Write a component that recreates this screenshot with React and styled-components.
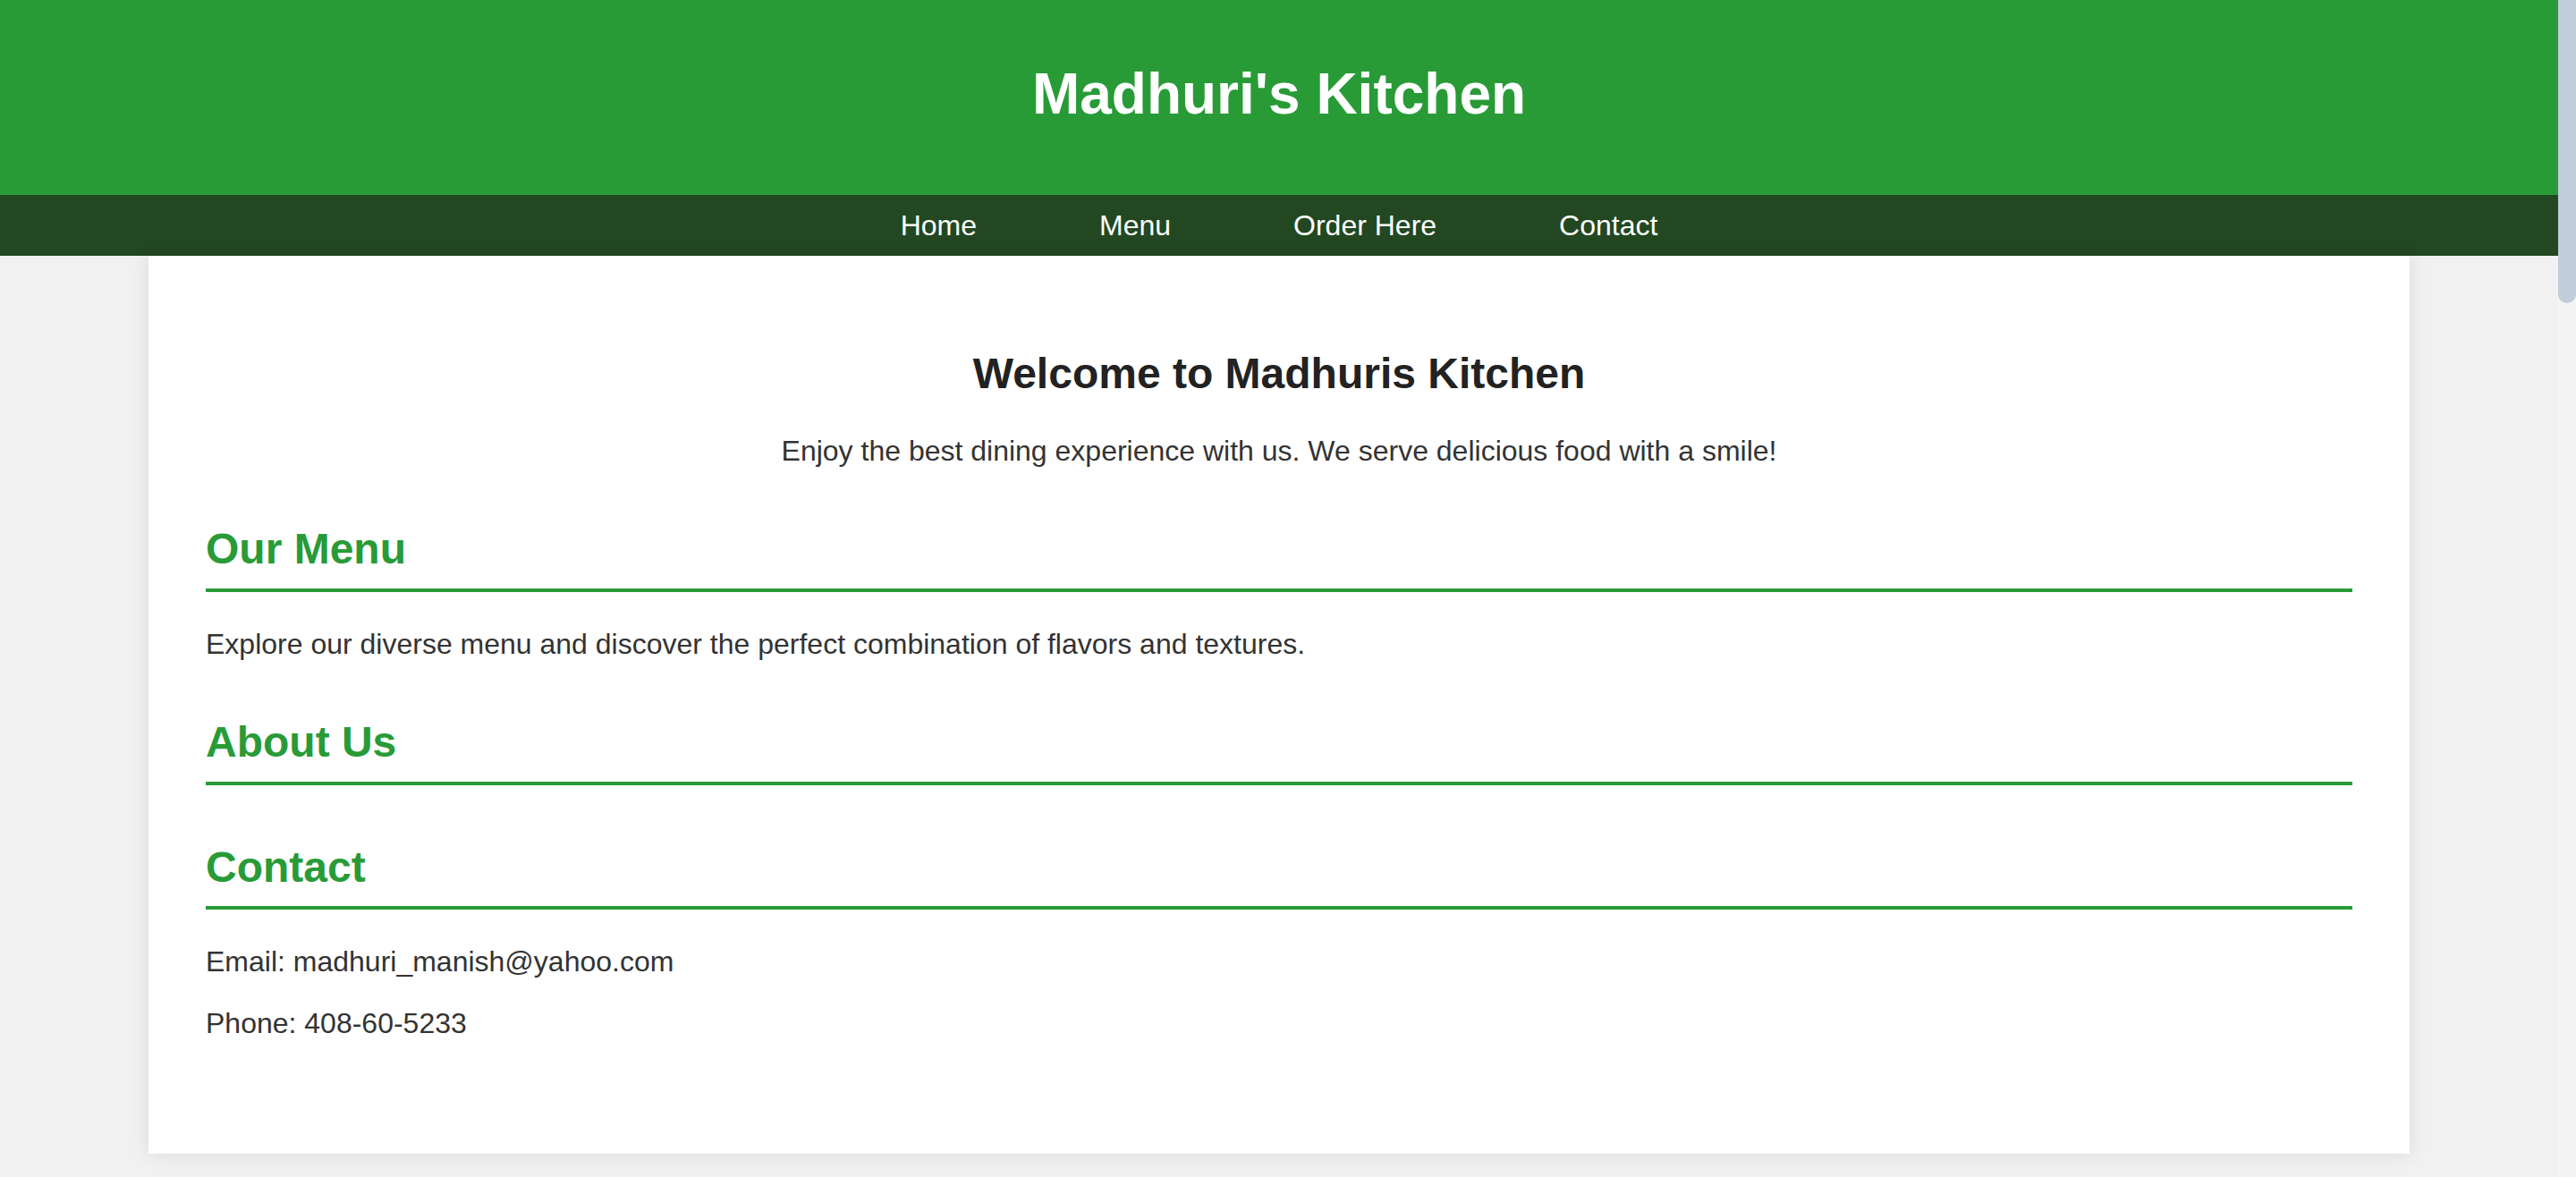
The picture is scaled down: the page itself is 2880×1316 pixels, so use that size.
import styled, { createGlobalStyle } from 'styled-components';

const GlobalStyle = createGlobalStyle`
  html,
  body {
    margin: 0;
    height: 100%;
    overflow: hidden;
  }

  body {
    font-family: 'Liberation Sans', Arial, sans-serif;
    font-size: 32px;
    line-height: 1.15;
    color: #333;
    background: #f1f1f1;
  }
`;

const links = ['Home', 'Menu', 'Order Here', 'Contact'];

const App = () => {
  return (
    <Shell>
      <GlobalStyle />
      <Page>
        <Header>
          <Title>Madhuri's Kitchen</Title>
        </Header>
        <Nav>
          <NavList>
            {links.map((l) => (
              <li key={l}>
                <NavLink href="#">{l}</NavLink>
              </li>
            ))}
          </NavList>
        </Nav>
        <Card>
          <Hero>
            <HeroTitle>Welcome to Madhuris Kitchen</HeroTitle>
            <Text>Enjoy the best dining experience with us. We serve delicious food with a smile!</Text>
          </Hero>
          <Section>
            <SectionTitle>Our Menu</SectionTitle>
            <Text>Explore our diverse menu and discover the perfect combination of flavors and textures.</Text>
          </Section>
          <Section>
            <SectionTitle>About Us</SectionTitle>
          </Section>
          <Section>
            <SectionTitle>Contact</SectionTitle>
            <Text>Email: madhuri_manish@yahoo.com</Text>
            <Text>Phone: 408-60-5233</Text>
          </Section>
        </Card>
      </Page>
      <Rail>
        <Thumb />
      </Rail>
    </Shell>
  );
};

const Shell = styled.div`
  display: flex;
  height: 100vh;
`;

const Page = styled.div`
  flex: 1;
  min-width: 0;
  background: #f1f1f1;
`;

const Header = styled.header`
  background: #289b37;
  color: #fff;
  text-align: center;
  padding: 69px 0 75px;
`;

const Title = styled.h1`
  margin: 0;
  font-size: 64px;
  font-weight: bold;
`;

const Nav = styled.nav`
  background: #234821;
  padding: 16px 0;
`;

const NavList = styled.ul`
  list-style: none;
  margin: 0;
  padding: 0;
  display: flex;
  justify-content: center;
  gap: 137px;
`;

const NavLink = styled.a`
  color: #fff;
  text-decoration: none;
  font-size: 32px;
`;

const Card = styled.main`
  max-width: 2400px;
  margin: 0 auto;
  padding: 64px;
  background: #fff;
  box-shadow: 0 0 20px rgba(0, 0, 0, 0.1);
`;

const Section = styled.section`
  margin-bottom: 64px;
`;

const Hero = styled(Section)`
  text-align: center;
`;

const HeroTitle = styled.h2`
  margin: 40px 0;
  font-size: 48px;
  color: #222;
`;

const SectionTitle = styled.h2`
  margin: 0 0 40px;
  padding-bottom: 16px;
  font-size: 48px;
  color: #289b37;
  border-bottom: 4px solid #289b37;
`;

const Text = styled.p`
  margin: 0 0 32px;
  font-size: 32px;
  color: #333;
`;

const Rail = styled.div`
  width: 20px;
  flex-shrink: 0;
  background: #f4f4f4;
`;

const Thumb = styled.div`
  height: 339px;
  background: #c1cdd9;
  border-radius: 0 0 10px 10px;
`;

export default App;
